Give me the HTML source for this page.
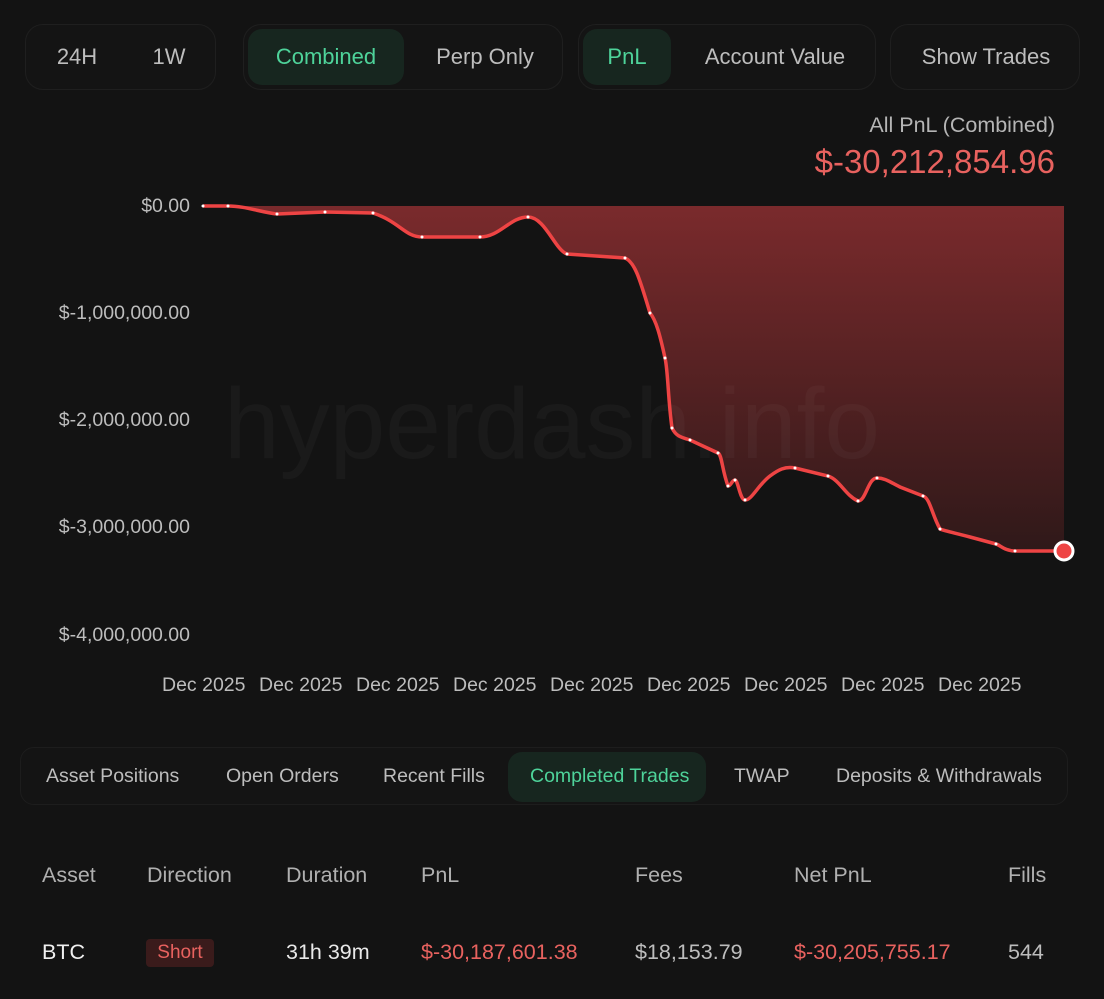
<!DOCTYPE html><html><head><style>
body{margin:0;width:1104px;height:999px;background:#131313;font-family:"Liberation Sans",sans-serif;overflow:hidden;position:relative;color:#c8c8c8}
.grp{position:absolute;top:24px;height:66px;border:1px solid #1f1f1f;border-radius:18px;background:#141414;box-sizing:border-box}
.b{position:absolute;top:4px;height:56px;line-height:56px;font-size:22px;color:#bdbdbd;text-align:center}
.on{background:#17261f;color:#4ed39a;border-radius:14px}
.t{position:absolute;font-size:19.5px;color:#bdbdbd}
.y{position:absolute;right:914px;font-size:19.5px;color:#bdbdbd}
.x{position:absolute;top:674px;font-size:19.5px;color:#bdbdbd}
.h{position:absolute;top:863px;font-size:21.5px;color:#b0b0b0}
.r{position:absolute;top:940px;font-size:21.5px}
</style></head><body>
<div class="grp" style="left:25px;width:191px"><div class="b" style="left:30px;width:42px">24H</div><div class="b" style="left:122px;width:42px">1W</div></div>
<div class="grp" style="left:243px;width:320px"><div class="b on" style="left:4px;width:156px">Combined</div><div class="b" style="left:176px;width:130px">Perp Only</div></div>
<div class="grp" style="left:578px;width:298px"><div class="b on" style="left:4px;width:88px">PnL</div><div class="b" style="left:110px;width:172px">Account Value</div></div>
<div class="grp" style="left:890px;width:190px"><div class="b" style="left:0;width:190px">Show Trades</div></div>
<div style="position:absolute;right:49px;top:113px;font-size:21.5px;color:#b5b5b5">All PnL (Combined)</div>
<div style="position:absolute;right:49px;top:143px;font-size:33px;color:#e8625f">$-30,212,854.96</div>
<div class="y" style="top:195px">$0.00</div>
<div class="y" style="top:302px">$-1,000,000.00</div>
<div class="y" style="top:409px">$-2,000,000.00</div>
<div class="y" style="top:516px">$-3,000,000.00</div>
<div class="y" style="top:624px">$-4,000,000.00</div>
<div class="x" style="left:162px">Dec 2025</div><div class="x" style="left:259px">Dec 2025</div><div class="x" style="left:356px">Dec 2025</div><div class="x" style="left:453px">Dec 2025</div><div class="x" style="left:550px">Dec 2025</div><div class="x" style="left:647px">Dec 2025</div><div class="x" style="left:744px">Dec 2025</div><div class="x" style="left:841px">Dec 2025</div><div class="x" style="left:938px">Dec 2025</div>
<svg width="1104" height="999" style="position:absolute;left:0;top:0">
<defs><linearGradient id="g" x1="0" y1="206" x2="0" y2="640" gradientUnits="userSpaceOnUse"><stop offset="0" stop-color="#7a2a2c"/><stop offset="1" stop-color="#1c1414"/></linearGradient></defs>
<path d="M203,206 L1064,206 L1064,551 L1015,551 C1005,551 1000,545 996,544 L970,537 C955,533 945,531 940,529 C932,515 930,498 923,496 L900,487 C890,482 885,478 877,478 C868,478 866,501 858,501 C845,495 840,480 828,476 L795,468 C785,466 778,470 770,476 C758,485 752,500 745,500 C740,500 738,480 735,480 C732,480 731,486 728,486 C722,470 722,455 718,453 L690,440 C680,437 676,436 672,428 C668,400 668,370 665,358 C660,335 656,320 650,313 C640,280 635,262 625,258 L567,254 C555,250 545,217 528,217 C510,217 500,237 480,237 L422,237 C405,237 400,222 373,213 L325,212 L277,214 C260,212 245,206 228,206 Z" fill="url(#g)"/>
<text x="552" y="458" font-family="Liberation Sans" font-size="100" fill="#ffffff" fill-opacity="0.03" text-anchor="middle">hyperdash.info</text>
<path d="M203,206 L228,206 C245,206 260,212 277,214 L325,212 L373,213 C400,222 405,237 422,237 L480,237 C500,237 510,217 528,217 C545,217 555,250 567,254 L625,258 C635,262 640,280 650,313 C656,320 660,335 665,358 C668,370 668,400 672,428 C676,436 680,437 690,440 L718,453 C722,455 722,470 728,486 C731,486 732,480 735,480 C738,480 740,500 745,500 C752,500 758,485 770,476 C778,470 785,466 795,468 L828,476 C840,480 845,495 858,501 C866,501 868,478 877,478 C885,478 890,482 900,487 L923,496 C930,498 932,515 940,529 C945,531 955,533 970,537 L996,544 C1000,545 1005,551 1015,551 L1064,551" fill="none" stroke="#ee4444" stroke-width="3.5"/>
<g fill="#fff"><circle cx="203" cy="206" r="1.5"/><circle cx="228" cy="206" r="1.5"/><circle cx="277" cy="214" r="1.5"/><circle cx="325" cy="212" r="1.5"/><circle cx="373" cy="213" r="1.5"/><circle cx="422" cy="237" r="1.5"/><circle cx="480" cy="237" r="1.5"/><circle cx="528" cy="217" r="1.5"/><circle cx="567" cy="254" r="1.5"/><circle cx="625" cy="258" r="1.5"/><circle cx="650" cy="313" r="1.5"/><circle cx="665" cy="358" r="1.5"/><circle cx="672" cy="428" r="1.5"/><circle cx="690" cy="440" r="1.5"/><circle cx="718" cy="453" r="1.5"/><circle cx="728" cy="486" r="1.5"/><circle cx="735" cy="480" r="1.5"/><circle cx="745" cy="500" r="1.5"/><circle cx="795" cy="468" r="1.5"/><circle cx="828" cy="476" r="1.5"/><circle cx="858" cy="501" r="1.5"/><circle cx="877" cy="478" r="1.5"/><circle cx="923" cy="496" r="1.5"/><circle cx="940" cy="529" r="1.5"/><circle cx="996" cy="544" r="1.5"/><circle cx="1015" cy="551" r="1.5"/></g>
<circle cx="1064" cy="551" r="9" fill="#ee4444" stroke="#fff" stroke-width="3"/>
</svg>
<div style="position:absolute;left:20px;top:747px;width:1046px;height:56px;border:1px solid #1d1d1d;border-radius:14px;background:#141414"></div>
<div style="position:absolute;left:508px;top:752px;width:198px;height:50px;background:#17261f;border-radius:14px"></div>
<div class="t" style="left:46px;top:765px">Asset Positions</div>
<div class="t" style="left:226px;top:765px">Open Orders</div>
<div class="t" style="left:383px;top:765px">Recent Fills</div>
<div class="t" style="left:530px;top:765px;color:#4ed39a">Completed Trades</div>
<div class="t" style="left:734px;top:765px">TWAP</div>
<div class="t" style="left:836px;top:765px">Deposits &amp; Withdrawals</div>
<div class="h" style="left:42px">Asset</div><div class="h" style="left:147px">Direction</div><div class="h" style="left:286px">Duration</div><div class="h" style="left:421px">PnL</div><div class="h" style="left:635px">Fees</div><div class="h" style="left:794px">Net PnL</div><div class="h" style="left:1008px">Fills</div>
<div class="r" style="left:42px;color:#f0f0f0">BTC</div>
<div style="position:absolute;left:146px;top:939px;width:68px;height:28px;background:#3a1b1b;border-radius:4px;color:#e8625f;font-size:19px;line-height:28px;text-align:center">Short</div>
<div class="r" style="left:286px;color:#e8e8e8">31h 39m</div>
<div class="r" style="left:421px;color:#e8625f">$-30,187,601.38</div>
<div class="r" style="left:635px;color:#bdbdbd">$18,153.79</div>
<div class="r" style="left:794px;color:#e8625f">$-30,205,755.17</div>
<div class="r" style="left:1008px;color:#bdbdbd">544</div>
</body></html>
